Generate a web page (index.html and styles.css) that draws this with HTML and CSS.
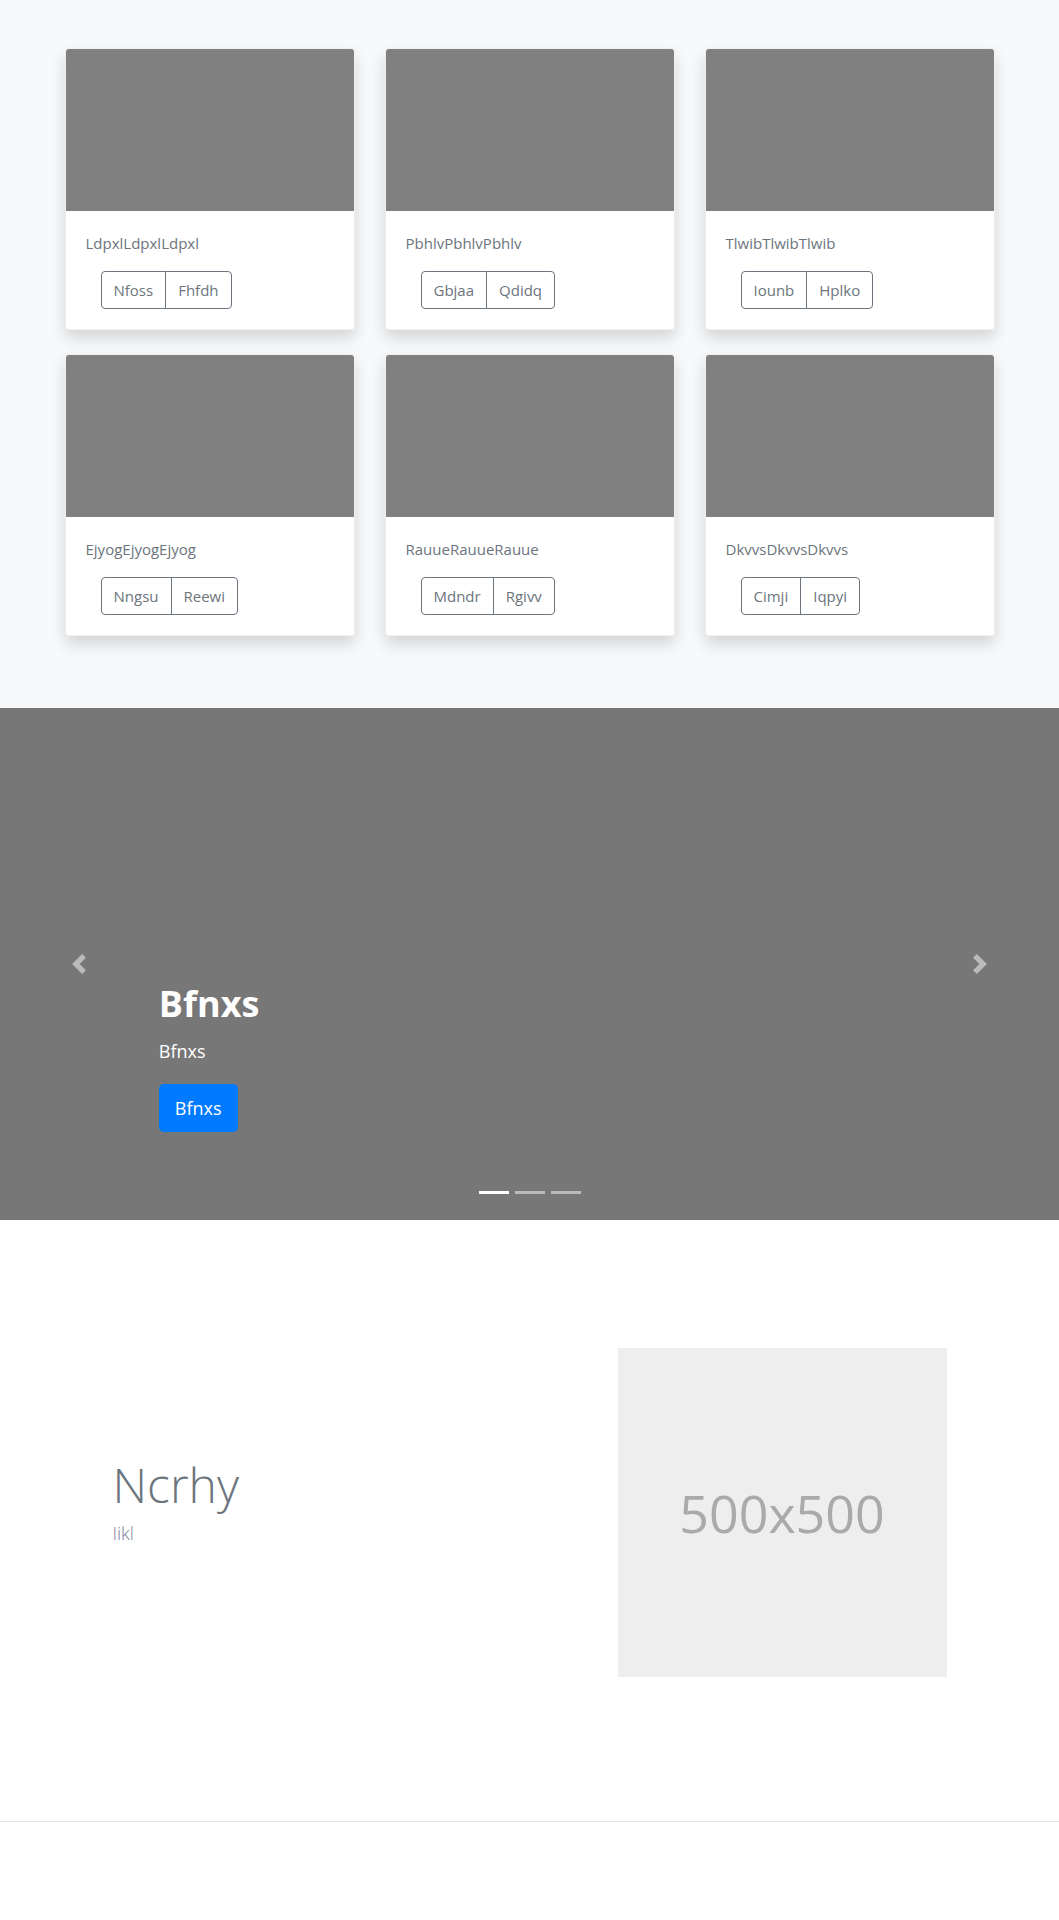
FILE: index.html
```html
<!DOCTYPE html>
<html lang="en">
<head>
<meta charset="utf-8">
<title>Album</title>
<link rel="stylesheet" href="styles.css">
</head>
<body>
<main>
  <section class="album">
    <div class="container">
      <div class="card-grid">
        <div class="card">
          <div class="card-img"></div>
          <div class="card-body">
            <p class="card-text">LdpxlLdpxlLdpxl</p>
            <div class="btn-row"><div class="btn-group"><button class="btn">Nfoss</button><button class="btn">Fhfdh</button></div></div>
          </div>
        </div>
        <div class="card">
          <div class="card-img"></div>
          <div class="card-body">
            <p class="card-text">PbhlvPbhlvPbhlv</p>
            <div class="btn-row"><div class="btn-group"><button class="btn">Gbjaa</button><button class="btn">Qdidq</button></div></div>
          </div>
        </div>
        <div class="card">
          <div class="card-img"></div>
          <div class="card-body">
            <p class="card-text">TlwibTlwibTlwib</p>
            <div class="btn-row"><div class="btn-group"><button class="btn">Iounb</button><button class="btn">Hplko</button></div></div>
          </div>
        </div>
        <div class="card">
          <div class="card-img"></div>
          <div class="card-body">
            <p class="card-text">EjyogEjyogEjyog</p>
            <div class="btn-row"><div class="btn-group"><button class="btn">Nngsu</button><button class="btn">Reewi</button></div></div>
          </div>
        </div>
        <div class="card">
          <div class="card-img"></div>
          <div class="card-body">
            <p class="card-text">RauueRauueRauue</p>
            <div class="btn-row"><div class="btn-group"><button class="btn">Mdndr</button><button class="btn">Rgivv</button></div></div>
          </div>
        </div>
        <div class="card">
          <div class="card-img"></div>
          <div class="card-body">
            <p class="card-text">DkvvsDkvvsDkvvs</p>
            <div class="btn-row"><div class="btn-group"><button class="btn">Cimji</button><button class="btn">Iqpyi</button></div></div>
          </div>
        </div>
      </div>
    </div>
  </section>

  <section class="carousel">
    <div class="caption">
      <h1 class="caption-title">Bfnxs</h1>
      <p class="caption-lead">Bfnxs</p>
      <a class="btn-primary-lg" href="#">Bfnxs</a>
    </div>
    <a class="control control-prev" href="#" aria-label="Previous">
      <svg width="20" height="20" viewBox="0 0 8 8"><path d="M5.25 0l-4 4 4 4 1.5-1.5L4.25 4l2.5-2.5L5.25 0z" fill="#fff"/></svg>
    </a>
    <a class="control control-next" href="#" aria-label="Next">
      <svg width="20" height="20" viewBox="0 0 8 8"><path d="M2.75 0l-1.5 1.5L3.75 4l-2.5 2.5L2.75 8l4-4-4-4z" fill="#fff"/></svg>
    </a>
    <ol class="indicators">
      <li class="active"></li>
      <li></li>
      <li></li>
    </ol>
  </section>

  <section class="feature">
    <div class="container">
      <div class="feature-row">
        <div class="feature-text">
          <h2 class="feature-title">Ncrhy</h2>
          <p class="feature-sub">Iikl</p>
        </div>
        <div class="feature-media">
          <div class="placeholder">500x500</div>
        </div>
      </div>
    </div>
  </section>
  <hr class="divider">
</main>
</body>
</html>
```

FILE: styles.css
```css
* { box-sizing: border-box; }

html, body {
  margin: 0;
  padding: 0;
  background: #fff;
}

body {
  font-family: "Open Sans", "Noto Sans", "Liberation Sans", sans-serif;
  color: #212529;
  font-size: 16px;
  line-height: 1.5;
}

.container {
  max-width: 960px;
  margin: 0 auto;
  padding: 0 15px;
}

/* Album */
.album {
  background: #f8f9fa;
  padding: 48px 0 72px;
}

.card-grid {
  display: grid;
  grid-template-columns: repeat(3, 1fr);
  column-gap: 30px;
  row-gap: 24px;
}

.card {
  background: #fff;
  border: 1px solid rgba(0, 0, 0, 0.06);
  border-radius: 4px;
  box-shadow: 0 0.5rem 1rem rgba(0, 0, 0, 0.15);
  overflow: hidden;
}

.card-img {
  height: 162px;
  background: #808080;
}

.card-body {
  padding: 20px;
}

.card-text {
  margin: 0 0 16px;
  font-size: 15px;
  line-height: 24px;
  color: #6c757d;
}

.btn-row {
  display: flex;
  padding-left: 15px;
}

.btn-group {
  display: inline-flex;
}

.btn {
  font-family: inherit;
  font-size: 15px;
  line-height: 24px;
  padding: 6px 12px;
  border: 1px solid #6c757d;
  background: transparent;
  color: #6c757d;
  margin: 0;
}

.btn:first-child {
  border-radius: 4px 0 0 4px;
}

.btn + .btn {
  margin-left: -1px;
  border-radius: 0 4px 4px 0;
}

/* Carousel */
.carousel {
  position: relative;
  height: 512px;
  background: #777;
  display: flex;
  align-items: flex-end;
  padding: 0 15% 88px;
}

.caption {
  color: #fff;
}

.caption-title {
  margin: 0 0 8px;
  font-size: 36px;
  line-height: 48px;
  font-weight: 700;
}

.caption-lead {
  margin: 0 0 18px;
  font-size: 18px;
  line-height: 30px;
}

.btn-primary-lg {
  display: inline-block;
  background: #007bff;
  color: #fff;
  text-decoration: none;
  font-size: 18px;
  line-height: 30px;
  padding: 9px 16px;
  border-radius: 4.8px;
}

.control {
  position: absolute;
  top: 0;
  bottom: 0;
  width: 15%;
  display: flex;
  align-items: center;
  justify-content: center;
  opacity: 0.5;
}

.control-prev { left: 0; }
.control-next { right: 0; }

.control svg { display: block; }

.indicators {
  position: absolute;
  left: 0;
  right: 0;
  bottom: 0;
  margin: 0 0 16px;
  padding: 0;
  list-style: none;
  display: flex;
  justify-content: center;
}

.indicators li {
  width: 30px;
  height: 3px;
  margin: 0 3px;
  background: #fff;
  opacity: 0.5;
  box-sizing: content-box;
  border-top: 10px solid transparent;
  border-bottom: 10px solid transparent;
  background-clip: padding-box;
}

.indicators li.active { opacity: 1; }

/* Feature */
.feature {
  padding: 128px 0;
}

.feature-row {
  display: grid;
  grid-template-columns: 1fr 1fr;
  column-gap: 30px;
  align-items: center;
}

.feature-text {
  padding: 0 48px;
  margin-bottom: 22px;
}

.feature-title {
  margin: 0 0 6px;
  font-size: 48px;
  line-height: 57.6px;
  font-weight: 300;
  color: #6c757d;
}

.feature-sub {
  margin: 0;
  font-size: 18px;
  line-height: 27px;
  font-weight: 300;
  color: #7d7fa0;
}

.feature-media {
  display: flex;
  justify-content: flex-end;
  padding: 0 48px;
}

.placeholder {
  width: 329px;
  height: 329px;
  background: #eee;
  color: #aaa;
  font-size: 52px;
  display: flex;
  align-items: center;
  justify-content: center;
}

.divider {
  margin: 16px 0 0;
  border: 0;
  border-top: 1px solid rgba(0, 0, 0, 0.1);
}
```
